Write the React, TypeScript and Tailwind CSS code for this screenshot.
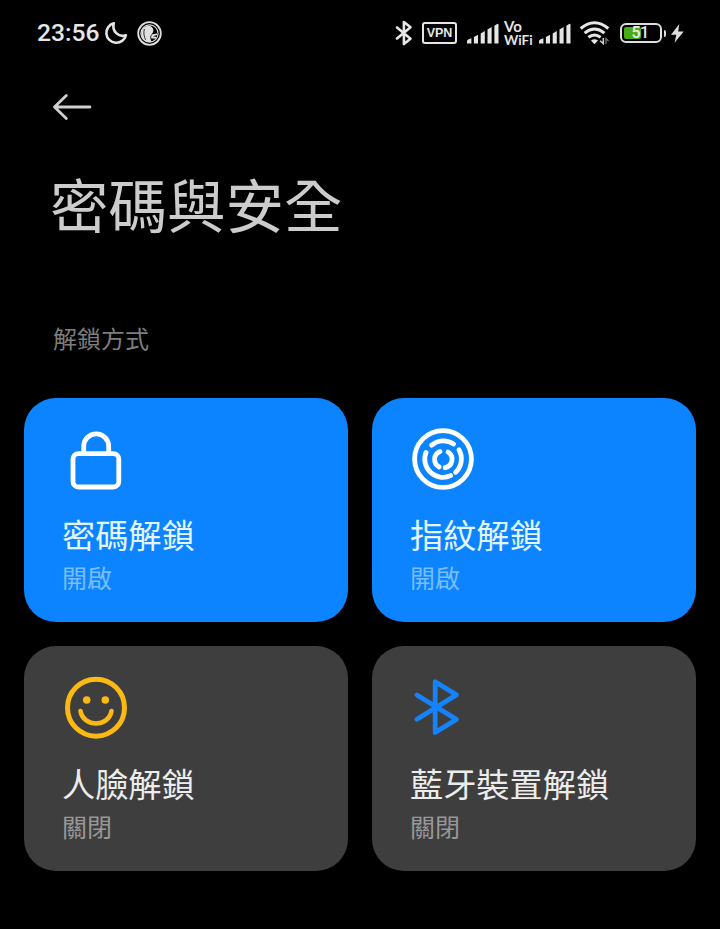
import type { ReactNode } from "react";
import clsx from "clsx";

type UnlockMethod = {
  title: string;
  status: string;
  enabled: boolean;
  icon: ReactNode;
};

function MoonIcon() {
  return (
    <svg width="24" height="24" viewBox="0 0 24 24" fill="none" className="ml-[3.5px]">
      <path
        d="M9.8 2.3A9.9 9.9 0 1 0 21.9 14.2C14.5 16.8 7.6 10 9.8 2.3Z"
        stroke="#e6e6e6"
        strokeWidth="2.6"
        strokeLinejoin="round"
      />
    </svg>
  );
}

function BrowserIcon() {
  return (
    <svg width="25" height="25" viewBox="0 0 25 25" fill="none" className="ml-[9px]">
      <circle cx="12.5" cy="12.5" r="11.3" stroke="#e0e0e0" strokeWidth="1.8" />
      <circle cx="12.5" cy="12.5" r="8.6" stroke="#e0e0e0" strokeWidth="1.1" />
      <path
        d="M8.5 5.5C12.6 3.6 16.2 6 16.4 9.6C16.4 12 14.2 13 13.4 15.2C13.1 17 13.8 19 14.6 20.9L11 21C6.5 20 4.4 16.6 4.2 12.5C4.1 9.6 5.8 6.8 8.5 5.5Z"
        fill="#e0e0e0"
      />
      <path d="M14.6 13.6L19.8 12.6L20.4 14L15.8 15.2L19.9 16L18.4 17.8L14 17.2Z" fill="#e0e0e0" />
      <path d="M7.4 8C6.3 11.5 7 15.8 8.6 18.8" stroke="#000" strokeWidth="0.8" />
    </svg>
  );
}

function StatusBluetooth() {
  return (
    <svg width="18" height="26" viewBox="0 0 18 26" fill="none">
      <path
        d="M2 7.5L15.5 18.7L8.9 24V2L15.5 7.3L2 18.5"
        stroke="#e6e6e6"
        strokeWidth="2.6"
        strokeLinejoin="round"
        strokeLinecap="round"
      />
    </svg>
  );
}

function SignalIcon() {
  return (
    <svg width="32" height="21" viewBox="0 0 32 21" fill="#e6e6e6">
      <path d="M0 18.4Q0 17.2 1.2 16.6L4.4 15.2V20.5H0Z" />
      <path d="M6.9 14L11 11.8V20.5H6.9Z" />
      <path d="M13.7 10.4L17.8 8V20.5H13.7Z" />
      <path d="M20.5 6.6L24.6 4V20.5H20.5Z" />
      <path d="M27.4 2.8L30.2 0.9Q31.5 0.4 31.5 2V20.5H27.4Z" />
    </svg>
  );
}

function WifiIcon() {
  return (
    <svg width="32" height="24" viewBox="0 0 32 24" fill="none">
      <path d="M1.7 7.5Q15.5-4 29.3 7.5" stroke="#e6e6e6" strokeWidth="3.1" />
      <path d="M5.6 12.1Q15.5 4 25.4 12.1" stroke="#e6e6e6" strokeWidth="3" />
      <path d="M9.4 16.3Q15.5 11.6 21.6 16.3" stroke="#e6e6e6" strokeWidth="3" />
      <path d="M12 19.6Q15.5 17 19 19.6L15.5 23.2Z" fill="#e6e6e6" />
      <path d="M24.3 17V22.6L21 19.8" stroke="#d0d0d0" strokeWidth="1.5" />
      <path d="M27 23V17.5L29.5 20" stroke="#777" strokeWidth="1.3" />
    </svg>
  );
}

function Battery({ level }: { level: number }) {
  return (
    <div className="flex items-center">
      <div className="relative flex h-[20px] w-[42px] rounded-[6px] border-2 border-[#dedede] p-[2px]">
        <div className="h-full rounded-[2px] bg-[#48ad17]" style={{ width: `${level}%` }} />
        <span className="absolute inset-0 flex items-center justify-center pr-[2px] font-[Roboto] text-[16px] font-medium leading-none tracking-[-0.5px] text-[#eeeeee]">
          {level}
        </span>
      </div>
      <div className="ml-[2px] h-[7px] w-[2px] rounded-r-sm bg-[#dedede]" />
      <svg width="13" height="19" viewBox="0 0 13 19" fill="#dedede" className="ml-[5px]">
        <path d="M8.3 0L0 10.8H5.3L3.6 18.8L12.7 7.5H7.2Z" />
      </svg>
    </div>
  );
}

function StatusBar() {
  return (
    <div className="flex h-[66px] items-center justify-between pl-[37px] pr-[36px]">
      <div className="flex items-center">
        <span className="w-[63px] font-[Roboto] text-[24.6px] font-medium leading-none text-[#e6e6e6]">
          23:56
        </span>
        <MoonIcon />
        <BrowserIcon />
      </div>
      <div className="flex items-center">
        <StatusBluetooth />
        <div className="ml-[9px] flex h-[22px] w-[35px] items-center justify-center rounded-[3px] border-2 border-[#e6e6e6] font-['Liberation_Sans'] text-[12.5px] font-bold leading-none text-[#e6e6e6]">
          VPN
        </div>
        <div className="ml-[9.5px]">
          <SignalIcon />
        </div>
        <div className="ml-[5.5px] w-[29px] whitespace-nowrap font-[Lato] font-bold text-[#e6e6e6]">
          <div className="text-[15px] leading-[14px]">Vo</div>
          <div className="text-[13.6px] leading-[15px]">WiFi</div>
        </div>
        <div className="ml-[6px]">
          <SignalIcon />
        </div>
        <div className="ml-[8px] mr-[9px]">
          <WifiIcon />
        </div>
        <Battery level={51} />
      </div>
    </div>
  );
}

function LockIcon() {
  return (
    <svg width="64" height="64" viewBox="0 0 64 64" fill="none" stroke="#fff" strokeWidth="4.8">
      <path d="M19.7 26V19.3a12.5 12.5 0 0 1 25 0V26" />
      <rect x="9" y="26.6" width="45.8" height="33.4" rx="5.5" />
    </svg>
  );
}

function FingerprintIcon() {
  return (
    <svg
      width="64"
      height="64"
      viewBox="0 0 64 64"
      fill="none"
      stroke="#fff"
      strokeWidth="4.8"
      strokeLinecap="round"
      className="-ml-px"
    >
      <circle cx="32" cy="32" r="28.4" />
      <path d="M20.6 18.2A18.2 18.2 0 0 1 42.6 17" />
      <path d="M47.9 22.8A18.2 18.2 0 0 1 44.6 45.3" />
      <path d="M15 25.4A18.2 18.2 0 0 0 39.6 48.6" />
      <path d="M29 24.4A8.6 8.6 0 0 0 28.2 40" />
      <path d="M37 25A8.6 8.6 0 0 1 34.2 40.7" />
    </svg>
  );
}

function FaceIcon() {
  return (
    <svg width="64" height="64" viewBox="0 0 64 64" fill="none" stroke="#fcb813" strokeWidth="5">
      <circle cx="32" cy="32.7" r="28.5" />
      <circle cx="22.7" cy="25" r="3.8" fill="#fcb813" stroke="none" />
      <circle cx="41.3" cy="25" r="3.8" fill="#fcb813" stroke="none" />
      <path d="M16.5 36C19.5 52.6 44.5 52.6 47.5 36" strokeWidth="4.6" strokeLinecap="round" />
    </svg>
  );
}

function BluetoothIcon() {
  return (
    <svg width="64" height="64" viewBox="0 0 64 64" fill="none">
      <path
        d="M4.9 20L44.4 44.4L23.2 57.5V6.7L44.4 19.9L4.9 44.2"
        stroke="#1583fb"
        strokeWidth="4.8"
        strokeLinejoin="round"
        strokeLinecap="round"
      />
    </svg>
  );
}

const methods: UnlockMethod[] = [
  { title: "密碼解鎖", status: "開啟", enabled: true, icon: <LockIcon /> },
  { title: "指紋解鎖", status: "開啟", enabled: true, icon: <FingerprintIcon /> },
  { title: "人臉解鎖", status: "關閉", enabled: false, icon: <FaceIcon /> },
  { title: "藍牙裝置解鎖", status: "關閉", enabled: false, icon: <BluetoothIcon /> },
];

function MethodCard({ title, status, enabled, icon }: UnlockMethod) {
  return (
    <button
      type="button"
      className={clsx(
        "flex h-[224.7px] flex-col items-start rounded-[32px] pl-[38px] pt-[29px] text-left",
        enabled ? "bg-[#0d84ff]" : "bg-[#3e3e3e]",
      )}
    >
      <div className="ml-[1.5px]">{icon}</div>
      <span
        className={clsx(
          "mt-[19.7px] text-[33.2px] leading-[48px]",
          enabled ? "text-[#e2f6ff]" : "text-[#ececec]",
        )}
      >
        {title}
      </span>
      <span
        className={clsx(
          "mt-[0.8px] text-[25px] leading-[36px]",
          enabled ? "text-[#78bdfc]" : "text-[#989898]",
        )}
      >
        {status}
      </span>
    </button>
  );
}

export default function App() {
  return (
    <div className="h-[929px] w-[720px] overflow-hidden bg-black font-['Noto_Sans_CJK_TC',sans-serif]">
      <StatusBar />

      <header className="pl-[50px]">
        <button type="button" aria-label="返回" className="mt-[26px] block">
          <svg width="44" height="30" viewBox="0 0 44 30" fill="none" className="ml-[2px]">
            <path
              d="M14.3 3.5L2.5 15L14.3 26.5M2.5 15H38"
              stroke="#cfcfcf"
              strokeWidth="2.8"
              strokeLinecap="round"
              strokeLinejoin="round"
            />
          </svg>
        </button>
        <h1 className="mt-[39px] text-[58.5px] leading-[84px] text-[#cccccc]">密碼與安全</h1>
      </header>

      <h2 className="mt-[75px] pl-[53px] text-[24px] leading-[36px] text-[#7d7d7d]">解鎖方式</h2>

      <div className="mt-[41.6px] grid grid-cols-2 gap-6 px-6">
        {methods.map((method) => (
          <MethodCard key={method.title} {...method} />
        ))}
      </div>
    </div>
  );
}
